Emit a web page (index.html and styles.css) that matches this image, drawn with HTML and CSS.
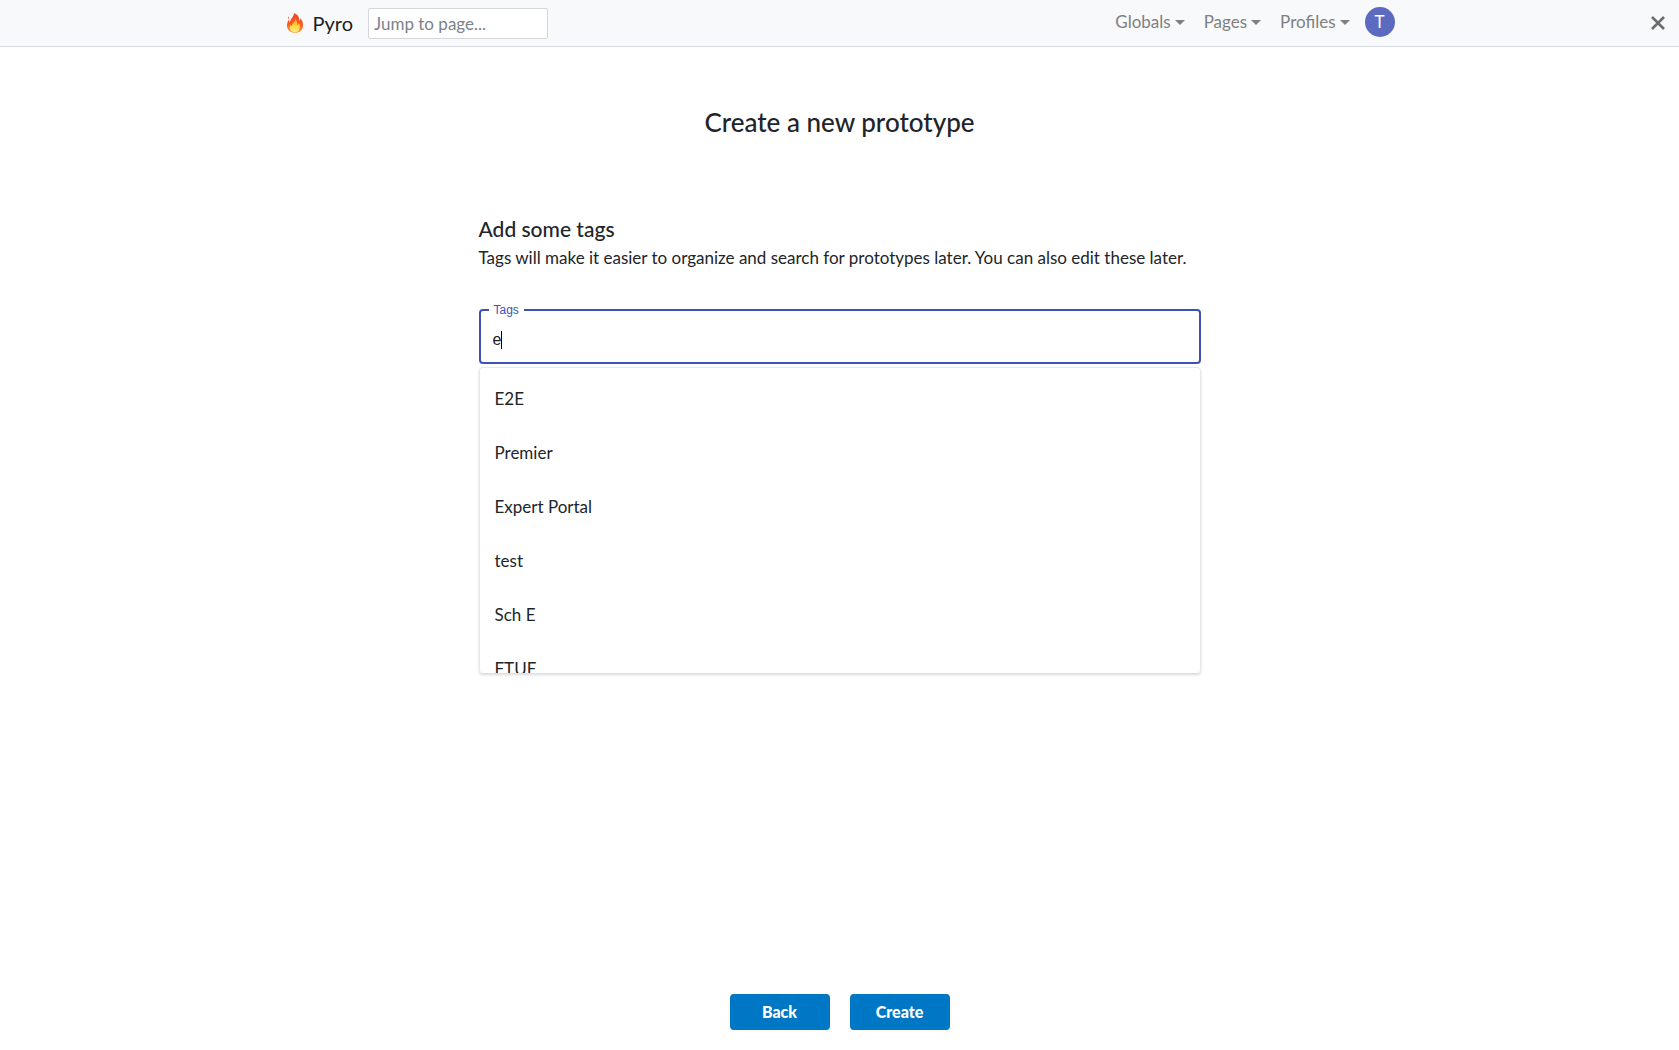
FILE: index.html
```html
<!DOCTYPE html>
<html lang="en">
<head>
<meta charset="utf-8">
<meta name="viewport" content="width=device-width, initial-scale=1">
<title>Pyro</title>
<link rel="stylesheet" href="styles.css">
</head>
<body>
<header class="topbar">
  <div class="topbar-inner">
    <a class="brand" href="#">
      <svg class="flame" viewBox="0 0 18 22" aria-hidden="true">
        <defs>
          <linearGradient id="outer" x1="0" y1="0" x2="0" y2="1"><stop offset="0" stop-color="#f0432b"/><stop offset=".55" stop-color="#fa5a24"/><stop offset="1" stop-color="#fb9a2c"/></linearGradient>
          <linearGradient id="inner" x1="0" y1="0" x2="0" y2="1"><stop offset="0" stop-color="#ff9a1f"/><stop offset=".5" stop-color="#ffd23a"/><stop offset="1" stop-color="#fff08a"/></linearGradient>
        </defs>
        <path fill="url(#outer)" d="M8 1c4 1.500 5.500 4.500 5.300 8 .8-.7 1-1.900.8-3 2.100 2.300 3.200 5 2.900 8-.4 4-3.600 6.800-8 6.800S1.300 18 1 14c-.2-2.600.8-4.700 2-6.600.1 1.300.4 2.200 1 3C4 7 7.800 5.200 8 1zM2.200 4.500c1 .8 1.200 1.700.7 2.600-.8-.8-1-1.600-.7-2.600z"/>
        <path fill="url(#inner)" d="M9.300 6.500c1.700 2.300 2.300 4.500 2 6.800.9-.5 1.400-1.200 1.700-2.200 1.600 3.200 1.200 9.200-4 9.200-5 0-6.300-4.300-4.600-8.100.4 1 .9 1.600 1.700 2C5.700 11 9.500 10 9.300 6.500z"/>
      </svg>
      Pyro
    </a>
    <input class="jump" type="text" placeholder="Jump to page..." aria-label="Jump to page">
    <nav class="menu">
      <button class="menu-item" type="button">Globals</button>
      <button class="menu-item" type="button">Pages</button>
      <button class="menu-item" type="button">Profiles</button>
      <button class="avatar" type="button">T</button>
    </nav>
  </div>
  <button class="close" type="button" aria-label="Close">
    <svg viewBox="0 0 14 14" aria-hidden="true"><path d="M1 1l12 12M13 1L1 13" stroke="currentColor" stroke-width="2.600"/></svg>
  </button>
</header>
<main class="wizard">
  <h1 class="title">Create a new prototype</h1>
  <section class="step">
    <h2 class="step-title">Add some tags</h2>
    <p class="step-text">Tags will make it easier to organize and search for prototypes later. You can also edit these later.</p>
    <div class="picker">
      <fieldset class="field">
        <legend class="field-legend"><label for="tags">Tags</label></legend>
        <input class="field-input" id="tags" type="text" value="e" autocomplete="off">
        <span class="text-cursor"></span>
      </fieldset>
      <ul class="options">
        <li class="option">E2E</li>
        <li class="option">Premier</li>
        <li class="option">Expert Portal</li>
        <li class="option">test</li>
        <li class="option">Sch E</li>
        <li class="option">FTUE</li>
      </ul>
    </div>
  </section>
  <div class="actions">
    <button class="action" type="button">Back</button>
    <button class="action" type="button">Create</button>
  </div>
</main>
</body>
</html>
```
FILE: styles.css
```css
* { box-sizing: border-box; }

body {
  margin: 0;
  min-height: 100vh;
  display: flex;
  flex-direction: column;
  font: 400 17px/24px Lato, "Open Sans", sans-serif;
  color: #212529;
  background: #fff;
}

button, input { font: inherit; }
button { cursor: pointer; }

.topbar {
  display: grid;
  grid-template-columns: 1fr minmax(0, 1110px) 1fr;
  align-items: center;
  height: 47px;
  background: #f8f9fb;
  border-bottom: 1px solid #d6d9dd;
}

.topbar-inner {
  grid-column: 2;
  display: flex;
  align-items: center;
}

.brand {
  display: flex;
  align-items: center;
  gap: 8px;
  margin-right: 15px;
  font-size: 20px;
  color: #1b1e21;
  text-decoration: none;
}

.flame { width: 20px; height: 22px; }

.jump {
  width: 180px;
  height: 31px;
  padding: 0 5px;
  border: 1px solid #d3d7dc;
  border-radius: 2px;
  background: #fff;
  color: #212529;
}

.jump::placeholder { color: #7b828a; }

.menu {
  display: flex;
  align-items: center;
  gap: 19px;
  margin-left: auto;
  padding-bottom: 2px;
}

.menu-item {
  display: flex;
  align-items: center;
  gap: 4px;
  padding: 0;
  border: 0;
  background: none;
  color: #7f8081;
}

.menu-item::after {
  content: "";
  border: 5px solid transparent;
  border-top-color: currentColor;
  border-bottom: 0;
}

.avatar {
  width: 30px;
  height: 30px;
  margin-left: -4px;
  padding: 0;
  border: 0;
  border-radius: 50%;
  background: #5c6bc0;
  color: #fff;
}

.close {
  justify-self: end;
  display: flex;
  margin-right: 14px;
  padding: 0;
  border: 0;
  background: none;
  color: #6c6c6c;
}

.close svg { width: 14px; height: 14px; }

.wizard {
  flex: 1;
  display: flex;
  flex-direction: column;
  align-items: center;
  padding: 59px 16px 20px;
}

.title {
  margin: 0;
  font-size: 26px;
  font-weight: 500;
  line-height: 32px;
}

.step {
  width: 100%;
  max-width: 722px;
  margin-top: 77px;
}

.step-title {
  margin: 0;
  font-size: 21px;
  font-weight: 500;
  line-height: 28px;
}

.step-text { margin: 3px 0 0; }

.picker { margin-top: 33px; }

.field {
  display: flex;
  align-items: center;
  height: 61px;
  margin: 0;
  padding: 0 12px 0 8px;
  border: 2px solid #3f51b5;
  border-radius: 4px;
  font: 400 16px/20px "Liberation Sans", Arial, sans-serif;
}

.field-legend {
  padding: 0 5px;
  font-size: 12px;
  line-height: 14px;
  color: #3f51b5;
}

.field-input {
  field-sizing: content;
  margin-left: 4px;
  padding: 0;
  border: 0;
  outline: 0;
  background: none;
  color: #212121;
}

.text-cursor {
  width: 1px;
  height: 18px;
  background: #000;
}

.options {
  height: 306px;
  margin: 3px 0 0;
  padding: 4px 0;
  overflow: hidden;
  list-style: none;
  border: 1px solid #e8e8e8;
  border-bottom-width: 0;
  border-radius: 4px;
  box-shadow: 0 2px 3px rgba(0, 0, 0, .15);
}

.option { padding: 15px; }

.actions {
  display: flex;
  gap: 20px;
  margin-top: auto;
}

.action {
  width: 100px;
  height: 36px;
  padding: 0;
  border: 0;
  border-radius: 4px;
  background: #0077c5;
  color: #fff;
  font-size: 16px;
  font-weight: 900;
}
```
